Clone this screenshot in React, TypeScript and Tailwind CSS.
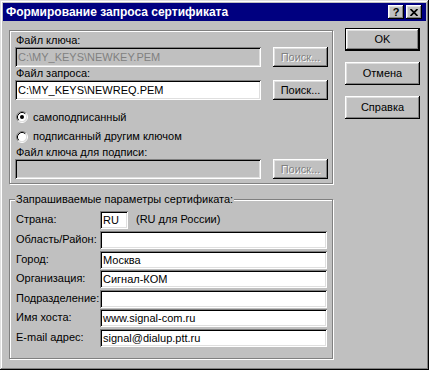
import * as React from "react"

const raised =
  "shadow-[inset_-1px_-1px_#000,inset_1px_1px_#fff,inset_-2px_-2px_#808080,inset_2px_2px_#dfdfdf]"
const sunken =
  "shadow-[inset_1px_1px_#808080,inset_-1px_-1px_#fff,inset_2px_2px_#000,inset_-2px_-2px_#dfdfdf]"
const etched = "border border-[#808080] shadow-[inset_1px_1px_#fff,1px_1px_#fff]"

type Param = {
  label: string
  value: string
  row: string
  short?: boolean
}

const params: Param[] = [
  { label: "Страна:", value: "RU", row: "h-[20px]", short: true },
  { label: "Область/Район:", value: "", row: "h-[20px]" },
  { label: "Город:", value: "Москва", row: "h-[19px]" },
  { label: "Организация:", value: "Сигнал-КОМ", row: "h-[20px]" },
  { label: "Подразделение:", value: "", row: "h-[19px]" },
  { label: "Имя хоста:", value: "www.signal-com.ru", row: "h-[20px]" },
  { label: "E-mail адрес:", value: "signal@dialup.ptt.ru", row: "h-[18px]" },
]

function Radio({ checked }: { checked?: boolean }) {
  return (
    <svg width="12" height="12" viewBox="0 0 12 12" className="shrink-0">
      <circle cx="6" cy="6" r="4.5" fill="#fff" />
      <path d="M2.11 9.89 A5.5 5.5 0 0 1 9.89 2.11" fill="none" stroke="#808080" strokeWidth="1" />
      <path d="M9.89 2.11 A5.5 5.5 0 0 1 2.11 9.89" fill="none" stroke="#fff" strokeWidth="1" />
      <path d="M2.82 9.18 A4.5 4.5 0 0 1 9.18 2.82" fill="none" stroke="#000" strokeWidth="1" />
      <path d="M9.18 2.82 A4.5 4.5 0 0 1 2.82 9.18" fill="none" stroke="#dfdfdf" strokeWidth="1" />
      {checked ? <circle cx="6" cy="6" r="2" fill="#000" /> : null}
    </svg>
  )
}

function Edit({ value, disabled, className = "" }: { value?: string; disabled?: boolean; className?: string }) {
  return (
    <div
      className={`flex items-center pl-[3px] whitespace-nowrap overflow-hidden ${sunken} ${
        disabled ? "bg-[#c0c0c0] text-[#808080]" : "bg-white text-black"
      } ${className}`}
    >
      {value}
    </div>
  )
}

function Browse({ disabled }: { disabled?: boolean }) {
  return (
    <div
      className={`flex h-[20px] w-[55px] items-center justify-center bg-[#c0c0c0] ${raised} ${
        disabled ? "text-[#808080] [text-shadow:1px_1px_0_#fff]" : "text-black"
      }`}
    >
      Поиск...
    </div>
  )
}

export default function App() {
  return (
    <div className="flex h-[370px] w-[429px] flex-col bg-[#c0c0c0] p-[3px] font-['Liberation_Sans',Arial,sans-serif] text-[11px] text-black shadow-[inset_-1px_-1px_#000,inset_1px_1px_#dfdfdf,inset_-2px_-2px_#808080,inset_2px_2px_#fff]">
      {/* title bar */}
      <div className="flex h-[18px] items-center bg-[#000080] pr-[4px] pl-[3px]">
        <span className="text-[12px] font-bold text-white">Формирование запроса сертификата</span>
        <div className="ml-auto flex gap-[2px]">
          <div className={`flex h-[14px] w-[16px] items-center justify-center bg-[#c0c0c0] text-[11px] leading-none font-bold ${raised}`}>
            ?
          </div>
          <div className={`flex h-[14px] w-[16px] items-center justify-center bg-[#c0c0c0] ${raised}`}>
            <svg width="8" height="7" viewBox="0 0 8 7">
              <path d="M0.5 0 L7.5 7 M7.5 0 L0.5 7" stroke="#000" strokeWidth="1.7" />
            </svg>
          </div>
        </div>
      </div>

      <div className="flex pl-[6px]">
        {/* left column */}
        <div className="mt-[9px] flex w-[324px] flex-col">
          <div className={`flex h-[154px] flex-col pt-[3px] pl-[5px] ${etched}`}>
            <div className="h-[13px] pl-[1px] leading-[13px]">Файл ключа:</div>
            <div className="flex gap-[12px]">
              <Edit value="C:\MY_KEYS\NEWKEY.PEM" disabled className="h-[20px] w-[246px]" />
              <Browse disabled />
            </div>
            <div className="h-[13px] pl-[1px] leading-[13px]">Файл запроса:</div>
            <div className="flex gap-[12px]">
              <Edit value="C:\MY_KEYS\NEWREQ.PEM" className="h-[20px] w-[246px]" />
              <Browse />
            </div>
            <div className="mt-[7px] flex h-[20px] items-center pl-[1px]">
              <Radio checked />
              <span className="ml-[5px]">самоподписанный</span>
            </div>
            <div className="flex h-[19px] items-center pl-[1px]">
              <Radio />
              <span className="ml-[5px]">подписанный другим ключом</span>
            </div>
            <div className="h-[13px] pl-[1px] leading-[13px]">Файл ключа для подписи:</div>
            <div className="flex gap-[12px]">
              <Edit disabled className="h-[20px] w-[246px]" />
              <Browse disabled />
            </div>
          </div>

          <div className={`relative mt-[15px] flex h-[160px] flex-col pt-[11px] pl-[6px] ${etched}`}>
            <span className="absolute -top-[7px] left-[5px] h-[13px] bg-[#c0c0c0] px-[1px] leading-[13px]">
              Запрашиваемые параметры сертификата:
            </span>
            {params.map((p) => (
              <div className={`flex items-start ${p.row}`} key={p.label}>
                <span className="h-[18px] w-[84px] leading-[16px]">{p.label}</span>
                {p.short ? (
                  <>
                    <Edit value={p.value} className="h-[18px] w-[28px]" />
                    <span className="ml-[8px] leading-[16px]">(RU для России)</span>
                  </>
                ) : (
                  <Edit value={p.value} className="h-[18px] w-[227px]" />
                )}
              </div>
            ))}
          </div>
        </div>

        {/* right column */}
        <div className="mt-[7px] ml-[12px] flex flex-col gap-[11px]">
          <div className="h-[23px] w-[75px] border border-black">
            <div className={`flex h-full items-center justify-center bg-[#c0c0c0] ${raised}`}>OK</div>
          </div>
          <div className={`flex h-[23px] w-[75px] items-center justify-center bg-[#c0c0c0] ${raised}`}>Отмена</div>
          <div className={`flex h-[23px] w-[75px] items-center justify-center bg-[#c0c0c0] ${raised}`}>Справка</div>
        </div>
      </div>
    </div>
  )
}
